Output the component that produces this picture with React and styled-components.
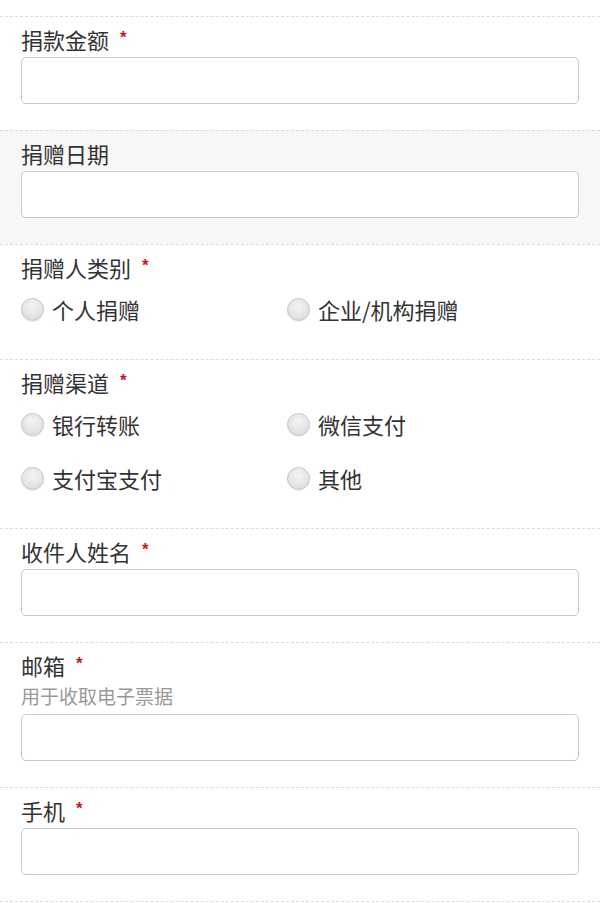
import React from "react";
import styled, { createGlobalStyle } from "styled-components";

const Global = createGlobalStyle`
  html, body { margin: 0; padding: 0; background: #fff; }
  body { font-family: "Noto Sans CJK SC", "Noto Sans", sans-serif; color: #333; }
  * { box-sizing: border-box; }
`;

const Page = styled.div`
  width: 600px;
  padding-top: 16px;
`;

const Section = styled.div`
  border-top: 1px dashed #dcdcdc;
  background: ${(p) => (p.$shaded ? "#f7f7f7" : "#fff")};
  padding: 10px 21px 26px 21px;
  &:last-child { border-bottom: 1px dashed #dcdcdc; }
`;

const Label = styled.div`
  font-size: 22px;
  line-height: 25px;
  color: #333;
  display: flex;
  align-items: flex-start;
`;

const Star = styled.span`
  color: #c8161d;
  font-size: 17px;
  line-height: 16px;
  margin-left: 11px;
  margin-top: 3px;
  font-family: "Liberation Sans", sans-serif;
  font-weight: bold;
`;

const Help = styled.div`
  font-size: 19px;
  line-height: 26px;
  color: #999;
  margin-top: 5px;
`;

const Input = styled.input`
  display: block;
  width: 100%;
  height: 47px;
  margin-top: 5px;
  border: 1px solid #c9c9c9;
  border-radius: 5px;
  background: #fff;
  outline: none;
  font-size: 18px;
  padding: 0 10px;
`;

const Options = styled.div`
  display: grid;
  grid-template-columns: 266px 1fr;
  row-gap: 6px;
  margin-top: 5px;
`;

const Option = styled.label`
  display: flex;
  align-items: center;
  height: 48px;
  font-size: 22px;
  color: #333;
  gap: 8px;
`;

const Radio = styled.span`
  width: 23px;
  height: 23px;
  border-radius: 50%;
  border: 1px solid #c4c4c4;
  background: radial-gradient(circle at 50% 35%, #f4f4f4 0%, #e4e4e4 60%, #d6d6d6 100%);
  box-shadow: 0 1px 1px rgba(0,0,0,0.06);
  flex: none;
`;

function Field({ label, required, help, shaded }) {
  return (
    <Section $shaded={shaded}>
      <Label>
        {label}
        {required && <Star>*</Star>}
      </Label>
      {help && <Help>{help}</Help>}
      <Input type="text" />
    </Section>
  );
}

function Choice({ label, options }) {
  return (
    <Section>
      <Label>
        {label}
        <Star>*</Star>
      </Label>
      <Options>
        {options.map((o) => (
          <Option key={o}>
            <Radio />
            {o}
          </Option>
        ))}
      </Options>
    </Section>
  );
}

export default function App() {
  return (
    <>
      <Global />
      <Page>
        <Field label="捐款金额" required />
        <Field label="捐赠日期" shaded />
        <Choice label="捐赠人类别" options={["个人捐赠", "企业/机构捐赠"]} />
        <Choice label="捐赠渠道" options={["银行转账", "微信支付", "支付宝支付", "其他"]} />
        <Field label="收件人姓名" required />
        <Field label="邮箱" required help="用于收取电子票据" />
        <Field label="手机" required />
      </Page>
    </>
  );
}
